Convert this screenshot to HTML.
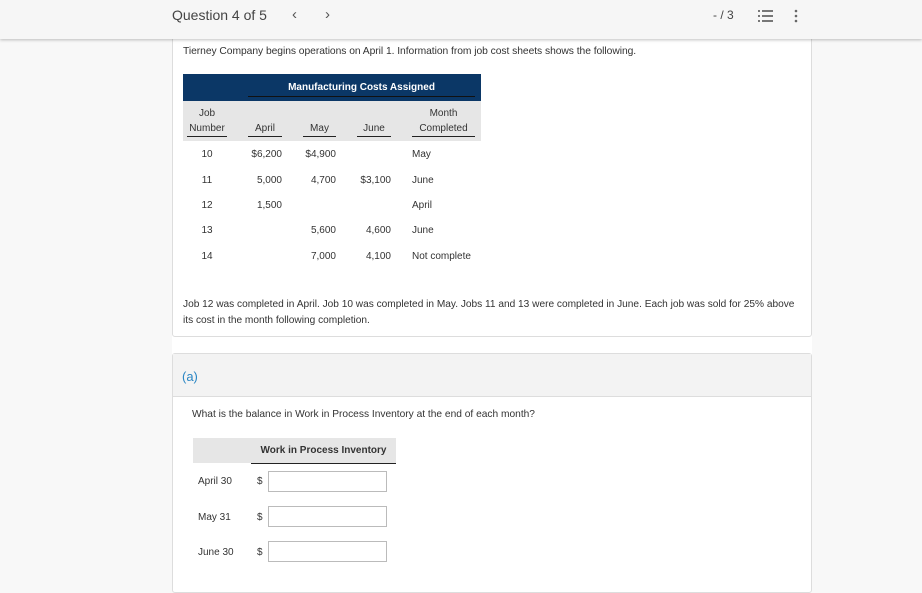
<!DOCTYPE html>
<html><head><meta charset="utf-8"><style>
*{margin:0;padding:0;box-sizing:border-box}
body{width:922px;height:586px;overflow:hidden;background:#f8f8f8;font-family:"Liberation Sans",sans-serif;color:#333;position:relative}
.a{position:absolute;white-space:nowrap;font-size:10px;line-height:12px}
.r{text-align:right}
.c{text-align:center}
.b{font-weight:bold}
.ul{position:absolute;height:1px;background:#222}
</style></head><body>
<div style="position:absolute;left:0;top:0;width:922px;height:39px;background:#f6f6f6;box-shadow:0 1px 3px rgba(0,0,0,.25);z-index:2"></div>
<div class="a" style="left:172px;top:7px;font-size:14px;line-height:17px;color:#444;z-index:3">Question 4 of 5</div>
<div class="a" style="left:292px;top:6px;font-size:15px;line-height:17px;color:#555;z-index:3">&lsaquo;</div>
<div class="a" style="left:325px;top:6px;font-size:15px;line-height:17px;color:#555;z-index:3">&rsaquo;</div>
<div class="a" style="left:713px;top:8px;font-size:12px;line-height:15px;color:#444;z-index:3">- / 3</div>
<svg style="position:absolute;left:758px;top:9px;z-index:3" width="16" height="14"><g fill="#777"><rect x="0" y="1" width="2" height="2"/><rect x="4" y="1" width="11" height="2"/><rect x="0" y="6" width="2" height="2"/><rect x="4" y="6" width="11" height="2"/><rect x="0" y="11" width="2" height="2"/><rect x="4" y="11" width="11" height="2"/></g></svg>
<svg style="position:absolute;left:794px;top:9px;z-index:3" width="4" height="14"><g fill="#666"><circle cx="2" cy="2" r="1.3"/><circle cx="2" cy="7" r="1.3"/><circle cx="2" cy="12" r="1.3"/></g></svg>

<div style="position:absolute;left:172px;top:39px;width:640px;height:547px;background:#fff"></div>
<div style="position:absolute;left:172px;top:30px;width:640px;height:307px;border:1px solid #ddd;border-radius:3px;background:#fff"></div>
<div class="a" style="left:183px;top:46px;font-size:10.3px;letter-spacing:-0.05px">Tierney Company begins operations on April 1. Information from job cost sheets shows the following.</div>

<div style="position:absolute;left:183px;top:74px;width:298px;height:27px;background:#0b3766"></div>
<div class="a b c" style="left:248px;top:82px;width:227px;color:#fff">Manufacturing Costs Assigned</div>
<div class="ul" style="left:248px;top:96px;width:227px;background:#111"></div>
<div style="position:absolute;left:183px;top:101px;width:298px;height:40px;background:#e6e6e6"></div>
<div class="a c" style="left:183px;top:108px;width:48px">Job</div>
<div class="a c" style="left:183px;top:123px;width:48px">Number</div>
<div class="ul" style="left:187px;top:136px;width:40px"></div>
<div class="a c" style="left:248px;top:123px;width:34px">April</div>
<div class="ul" style="left:248px;top:136px;width:34px"></div>
<div class="a c" style="left:303px;top:123px;width:33px">May</div>
<div class="ul" style="left:303px;top:136px;width:33px"></div>
<div class="a c" style="left:357px;top:123px;width:34px">June</div>
<div class="ul" style="left:357px;top:136px;width:34px"></div>
<div class="a c" style="left:410px;top:108px;width:67px">Month</div>
<div class="a c" style="left:410px;top:123px;width:67px">Completed</div>
<div class="ul" style="left:412px;top:136px;width:63px"></div>

<div class="a c" style="left:195px;top:149px;width:24px">10</div>
<div class="a r" style="left:232px;top:149px;width:50px">$6,200</div>
<div class="a r" style="left:286px;top:149px;width:50px">$4,900</div>
<div class="a" style="left:412px;top:149px">May</div>

<div class="a c" style="left:195px;top:175px;width:24px">11</div>
<div class="a r" style="left:232px;top:175px;width:50px">5,000</div>
<div class="a r" style="left:286px;top:175px;width:50px">4,700</div>
<div class="a r" style="left:341px;top:175px;width:50px">$3,100</div>
<div class="a" style="left:412px;top:175px">June</div>

<div class="a c" style="left:195px;top:200px;width:24px">12</div>
<div class="a r" style="left:232px;top:200px;width:50px">1,500</div>
<div class="a" style="left:412px;top:200px">April</div>

<div class="a c" style="left:195px;top:225px;width:24px">13</div>
<div class="a r" style="left:286px;top:225px;width:50px">5,600</div>
<div class="a r" style="left:341px;top:225px;width:50px">4,600</div>
<div class="a" style="left:412px;top:225px">June</div>

<div class="a c" style="left:195px;top:251px;width:24px">14</div>
<div class="a r" style="left:286px;top:251px;width:50px">7,000</div>
<div class="a r" style="left:341px;top:251px;width:50px">4,100</div>
<div class="a" style="left:412px;top:251px">Not complete</div>

<div class="a" style="left:183px;top:299px;font-size:10.15px">Job 12 was completed in April. Job 10 was completed in May. Jobs 11 and 13 were completed in June. Each job was sold for 25% above</div>
<div class="a" style="left:183px;top:315px;font-size:10.15px">its cost in the month following completion.</div>

<div style="position:absolute;left:172px;top:353px;width:640px;height:240px;border:1px solid #ddd;border-radius:3px;background:#fff"></div>
<div style="position:absolute;left:173px;top:354px;width:638px;height:43px;background:#f3f3f3;border-bottom:1px solid #ddd"></div>
<div class="a" style="left:182px;top:369px;font-size:13px;line-height:16px;color:#2a86c4">(a)</div>
<div class="a" style="left:192px;top:409px;font-size:10.2px">What is the balance in Work in Process Inventory at the end of each month?</div>

<div style="position:absolute;left:193px;top:438px;width:203px;height:25px;background:#e6e6e6"></div>
<div class="a b c" style="left:251px;top:445px;width:145px">Work in Process Inventory</div>
<div class="ul" style="left:251px;top:463px;width:145px"></div>

<div class="a" style="left:198px;top:476px">April 30</div>
<div class="a" style="left:257px;top:476px">$</div>
<div style="position:absolute;left:268px;top:471px;width:119px;height:21px;border:1px solid #bbb"></div>
<div class="a" style="left:198px;top:512px">May 31</div>
<div class="a" style="left:257px;top:512px">$</div>
<div style="position:absolute;left:268px;top:506px;width:119px;height:21px;border:1px solid #bbb"></div>
<div class="a" style="left:198px;top:547px">June 30</div>
<div class="a" style="left:257px;top:547px">$</div>
<div style="position:absolute;left:268px;top:541px;width:119px;height:21px;border:1px solid #bbb"></div>
</body></html>
